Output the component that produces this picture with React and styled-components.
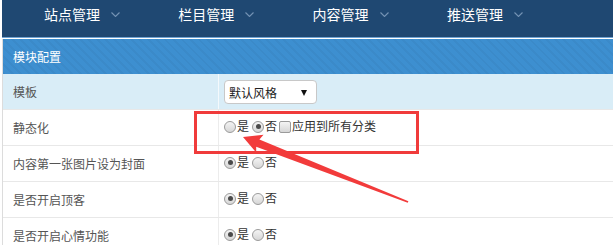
import React from "react";
import styled, { createGlobalStyle } from "styled-components";

const GlobalStyle = createGlobalStyle`
  body {
    margin: 0;
    background: #fff;
    font-family: "Liberation Sans", "Noto Sans CJK SC", sans-serif;
  }
`;

const navItems = ["站点管理", "栏目管理", "内容管理", "推送管理"];

const rows = [
  { label: "内容第一张图片设为封面", value: true },
  { label: "是否开启顶客", value: true },
  { label: "是否开启心情功能", value: true },
];

function Chevron() {
  return (
    <svg width="9" height="5" viewBox="0 0 9 5">
      <polyline
        points="0.5,0.5 4.5,4.5 8.5,0.5"
        fill="none"
        stroke="#7493b4"
        strokeWidth="1.1"
      />
    </svg>
  );
}

function YesNo({ value }) {
  return (
    <Options>
      <Radio $checked={value === true} />
      <OptText>是</OptText>
      <Radio $checked={value === false} $gap />
      <OptText>否</OptText>
    </Options>
  );
}

function App() {
  return (
    <Page>
      <GlobalStyle />
      <Nav>
        {navItems.map((item) => (
          <NavItem key={item}>
            {item}
            <Chevron />
          </NavItem>
        ))}
      </Nav>
      <Table>
        <Caption>模块配置</Caption>
        <Row $highlight>
          <Label>模板</Label>
          <Value $highlight>
            <Select>
              默认风格
              <Caret />
            </Select>
          </Value>
        </Row>
        <Row $border>
          <Label>静态化</Label>
          <Value>
            <Options>
              <Radio />
              <OptText>是</OptText>
              <Radio $checked $gap />
              <OptText>否</OptText>
              <Checkbox />
              <OptText>应用到所有分类</OptText>
            </Options>
          </Value>
        </Row>
        {rows.map((r) => (
          <Row $border key={r.label}>
            <Label>{r.label}</Label>
            <Value>
              <YesNo value={r.value} />
            </Value>
          </Row>
        ))}
      </Table>

      <RedBox />
      <Arrow viewBox="0 0 613 245">
        <polygon
          points="243,137 263.5,134.8 259.4,139.4 408.4,201.2 407.7,202.8 256.2,146.8 256.2,152.4"
          fill="#f23b3b"
        />
      </Arrow>
    </Page>
  );
}

export default App;

const Page = styled.div`
  position: relative;
  width: 613px;
  height: 245px;
  overflow: hidden;
  padding-left: 2px;
  box-sizing: border-box;
`;

const Nav = styled.div`
  display: flex;
  height: 37px;
  padding-left: 42px;
  background: #1f4872;
  border-bottom: 1px solid #6fa3d3;
  margin-bottom: 1px;
`;

const NavItem = styled.div`
  display: flex;
  align-items: center;
  gap: 11px;
  width: 134.3px;
  flex-shrink: 0;
  height: 28px;
  color: #fff;
  font-size: 14px;
  svg {
    margin-top: 1px;
  }
`;

const Table = styled.div`
  border-left: 1px solid #dcdcdc;
  font-size: 12px;
`;

const Caption = styled.div`
  height: 35px;
  display: flex;
  align-items: center;
  padding-left: 10px;
  color: #fff;
  font-size: 12px;
  background-color: #3d8fd0;
  background-image: repeating-linear-gradient(
    45deg,
    rgba(0, 0, 0, 0.035) 0 2px,
    rgba(255, 255, 255, 0) 2px 6px
  );
`;

const Row = styled.div`
  display: flex;
  height: 35px;
  background: ${(p) => (p.$highlight ? "#d9edf7" : "#fff")};
  border-top: ${(p) => (p.$border ? "1px solid #e8e8e8" : "none")};
`;

const Label = styled.div`
  width: 215px;
  flex-shrink: 0;
  display: flex;
  align-items: center;
  padding-left: 10px;
  box-sizing: border-box;
  color: #555;
`;

const Value = styled.div`
  flex: 1;
  display: flex;
  align-items: center;
  padding-left: 5px;
  border-left: 1px solid ${(p) => (p.$highlight ? "#f4f9fc" : "#ececec")};
  color: #333;
`;

const Select = styled.div`
  position: relative;
  width: 93px;
  height: 24px;
  box-sizing: border-box;
  margin-top: 1px;
  border: 1px solid #c8c8c8;
  border-radius: 4px;
  background: #fff;
  display: flex;
  align-items: center;
  padding-left: 4px;
  font-size: 12px;
  color: #222;
`;

const Caret = styled.span`
  position: absolute;
  right: 9px;
  top: 9px;
  border-left: 3.5px solid transparent;
  border-right: 3.5px solid transparent;
  border-top: 6px solid #111;
`;

const Options = styled.div`
  display: flex;
  align-items: center;
  margin-top: -2px;
`;

const Radio = styled.span`
  position: relative;
  width: 12px;
  height: 12px;
  box-sizing: border-box;
  border-radius: 50%;
  border: 1px solid #9a9a9a;
  background: linear-gradient(#f4f4f4, #d6d6d6);
  margin-left: ${(p) => (p.$gap ? "3px" : "0")};
  &::after {
    content: "";
    display: ${(p) => (p.$checked ? "block" : "none")};
    position: absolute;
    left: 2.5px;
    top: 2.5px;
    width: 5px;
    height: 5px;
    border-radius: 50%;
    background: #4a4a4a;
  }
`;

const Checkbox = styled.span`
  width: 12px;
  height: 12px;
  box-sizing: border-box;
  border: 1px solid #9a9a9a;
  border-radius: 2px;
  background: linear-gradient(#f4f4f4, #d6d6d6);
  margin-left: 2px;
`;

const OptText = styled.span`
  margin-left: 1px;
  font-size: 12px;
  line-height: 14px;
`;

const RedBox = styled.div`
  position: absolute;
  left: 194px;
  top: 111px;
  width: 225px;
  height: 43px;
  box-sizing: border-box;
  border: 3px solid #f03b3b;
  pointer-events: none;
`;

const Arrow = styled.svg`
  position: absolute;
  left: 0;
  top: 0;
  width: 613px;
  height: 245px;
  pointer-events: none;
`;
